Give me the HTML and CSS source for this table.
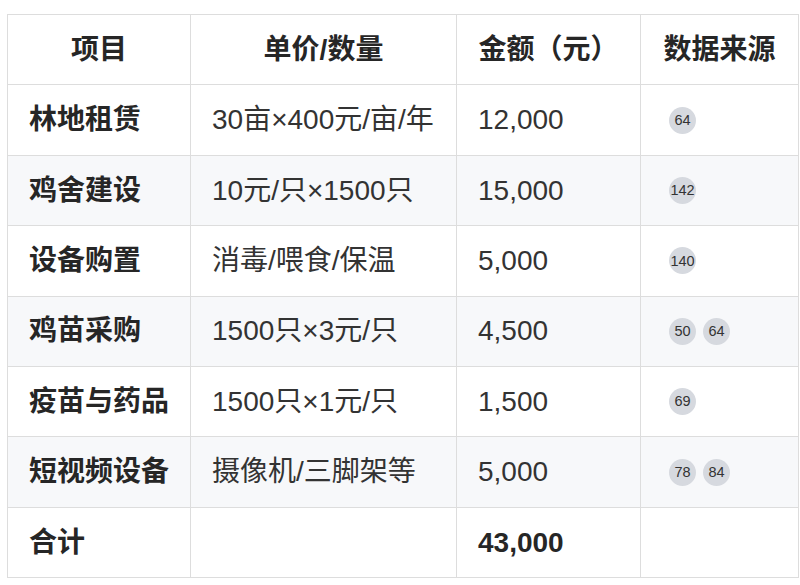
FILE: index.html
```html
<!DOCTYPE html>
<html lang="zh-CN">
<head>
<meta charset="utf-8">
<link rel="stylesheet" href="styles.css">
</head>
<body>
<div class="wrap">
<table class="budget">
  <colgroup>
    <col class="c1"><col class="c2"><col class="c3"><col class="c4">
  </colgroup>
  <thead>
    <tr><th>项目</th><th>单价/数量</th><th>金额（元）</th><th>数据来源</th></tr>
  </thead>
  <tbody>
    <tr><td class="name">林地租赁</td><td>30亩×400元/亩/年</td><td>12,000</td><td><div class="refs"><span class="badge">64</span></div></td></tr>
    <tr><td class="name">鸡舍建设</td><td>10元/只×1500只</td><td>15,000</td><td><div class="refs"><span class="badge">142</span></div></td></tr>
    <tr><td class="name">设备购置</td><td>消毒/喂食/保温</td><td>5,000</td><td><div class="refs"><span class="badge">140</span></div></td></tr>
    <tr><td class="name">鸡苗采购</td><td>1500只×3元/只</td><td>4,500</td><td><div class="refs"><span class="badge">50</span><span class="badge">64</span></div></td></tr>
    <tr><td class="name">疫苗与药品</td><td>1500只×1元/只</td><td>1,500</td><td><div class="refs"><span class="badge">69</span></div></td></tr>
    <tr><td class="name">短视频设备</td><td>摄像机/三脚架等</td><td>5,000</td><td><div class="refs"><span class="badge">78</span><span class="badge">84</span></div></td></tr>
    <tr class="total"><td class="name">合计</td><td></td><td class="sum">43,000</td><td></td></tr>
  </tbody>
</table>
</div>
</body>
</html>
```
FILE: styles.css
```css
html, body {
  margin: 0;
  padding: 0;
  background: #ffffff;
}
.wrap {
  padding: 14px 0 0 7px;
}
.budget {
  border-collapse: collapse;
  table-layout: fixed;
  width: 791px;
  font-family: "Liberation Sans", "Noto Sans CJK SC", sans-serif;
  font-size: 28px;
  color: #333333;
}
.c1 { width: 183px; }
.c2 { width: 266px; }
.c3 { width: 184px; }
.c4 { width: 158px; }
.budget th,
.budget td {
  border: 1px solid #dddddd;
  height: 69.4px;
  padding: 0 21px;
  vertical-align: middle;
  white-space: nowrap;
  line-height: 1.2;
}
.budget th {
  font-weight: 700;
  text-align: center;
  color: #262626;
}
.budget td {
  text-align: left;
}
.budget tbody tr:nth-child(even) td {
  background: #f7f8fa;
}
.name,
.sum {
  font-weight: 700;
  color: #262626;
}
.refs {
  display: flex;
  align-items: center;
  gap: 7px;
  padding-left: 7px;
}
.badge {
  display: inline-flex;
  align-items: center;
  justify-content: center;
  min-width: 27px;
  height: 27px;
  padding: 0 1px;
  box-sizing: border-box;
  border-radius: 14px;
  background: #d6d9df;
  color: #333333;
  font-size: 14.5px;
  font-weight: 400;
  line-height: 1;
}
```
